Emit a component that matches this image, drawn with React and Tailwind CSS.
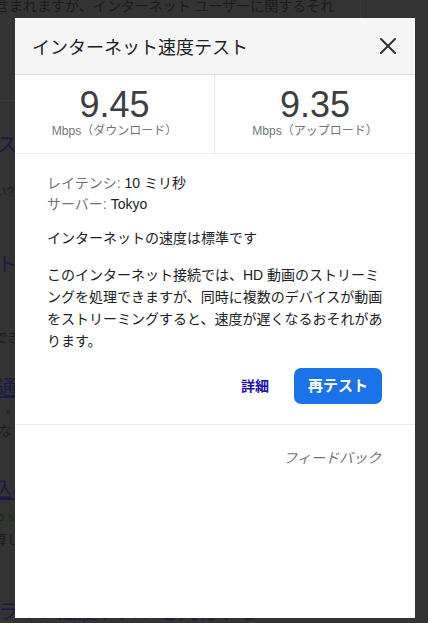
import React from 'react';

const font = "font-['Liberation_Sans','Noto_Sans_CJK_JP',sans-serif]";

function BackgroundPage() {
  // dimmed page behind the dialog; only the edges peek out
  return (
    <div className="flex flex-col whitespace-nowrap">
      <div className="mt-[-2px] ml-[-5px] text-[14px] leading-[16px] text-[#1c1c1c]">
        含まれますが、インターネット ユーザーに関するそれ
      </div>
      <div className="mt-[119px] ml-[-63px] text-[20px] leading-[24px] text-[#1a1a48]">速度テス</div>
      <div className="mt-[26px] ml-[-19px] text-[13px] leading-[18px] text-[#1c1c1c]">遅い?</div>
      <div className="mt-[52px] ml-[-43px] text-[20px] leading-[24px] text-[#1a1a48]">テスト</div>
      <div className="mt-[52px] ml-[-32px] text-[13px] leading-[18px] text-[#1c1c1c]">処理できます</div>
      <div className="mt-[29px] ml-[-3px] text-[20px] leading-[24px] text-[#1a1a48] underline">通信速度</div>
      <div className="mt-[8px] ml-[4px] text-[8px] leading-[10px] text-[#0e3014]">▼</div>
      <div className="mt-[4px] ml-[-1px] text-[13px] leading-[18px] text-[#1c1c1c]">なし</div>
      <div className="mt-[38px] ml-[-8px] text-[20px] leading-[24px] text-[#1a1a48] underline">込み</div>
      <div className="mt-[6px] ml-[-3px] text-[13px] leading-[18px] text-[#0e3014]">o speedtest</div>
      <div className="mt-[5px] ml-[-6px] text-[13px] leading-[18px] text-[#1c1c1c]">算して</div>
      <div className="mt-[51px] ml-[-2px] text-[20px] leading-[24px] text-[#1a1a48]">ライン速度テストを実行する</div>
    </div>
  );
}

function Stat({ value, label, divider }) {
  return (
    <div className={`flex flex-col items-center pt-[12px] ${divider ? 'border-r border-[#ebebeb]' : ''}`}>
      <div className="text-[36px] leading-[36px] text-[#3c4043]">{value}</div>
      <div className="text-[12px] leading-[16px] text-[#70757a]">{label}</div>
    </div>
  );
}

export default function App() {
  return (
    <div className={`relative h-[623px] overflow-hidden bg-[#333333] ${font}`}>
      <BackgroundPage />
      <div className="absolute left-[360px] top-0 h-[18px] w-px bg-[#3a3a3a]" />
      <div className="absolute left-0 top-[100px] h-px w-[15px] bg-[#3a3a3a]" />

      {/* Dialog */}
      <div className="absolute left-[15px] top-[18px] flex h-[600px] w-[400px] flex-col bg-white">
        <div className="flex h-[57px] items-center justify-between border-b border-[#dadce0] bg-[#f5f5f5] pl-[17px] pr-[19px]">
          <div className="mt-[4px] text-[18px] text-[#202124]">インターネット速度テスト</div>
          <svg width="16" height="16" viewBox="0 0 16 16" className="mb-[1px]">
            <path d="M1 1 L15 15 M15 1 L1 15" stroke="#333" strokeWidth="2" strokeLinecap="square" />
          </svg>
        </div>

        <div className="grid h-[79px] grid-cols-2 border-b border-[#ebebeb]">
          <Stat value="9.45" label="Mbps（ダウンロード）" divider />
          <Stat value="9.35" label="Mbps（アップロード）" />
        </div>

        <div className="pl-[32px] pr-[31px] pt-[19px] text-[14px] text-[#202124]">
          <div className="leading-[21px]">
            <span className="text-[#70757a]">レイテンシ: </span>10 ミリ秒
          </div>
          <div className="leading-[21px]">
            <span className="text-[#70757a]">サーバー: </span>Tokyo
          </div>
          <div className="mt-[13px] leading-[21px]">インターネットの速度は標準です</div>
          <p className="mt-[15px] leading-[22px]">
            このインターネット接続では、HD 動画のストリーミングを処理できますが、同時に複数のデバイスが動画をストリーミングすると、速度が遅くなるおそれがあります。
          </p>
          <div className="mt-[16px] flex items-center justify-end gap-[25px] pr-[2px]">
            <span className="text-[14px] font-bold text-[#1a0dab]">詳細</span>
            <button className="h-[36px] w-[88px] rounded-[7px] bg-[#1a73e8] text-[15px] font-bold text-white">
              再テスト
            </button>
          </div>
        </div>

        <div className="mt-[20px] border-t border-[#ebebeb] pr-[34px] pt-[21px] text-right">
          <span className="text-[14px] italic leading-[20px] text-[#70757a]">フィードバック</span>
        </div>
      </div>
    </div>
  );
}
